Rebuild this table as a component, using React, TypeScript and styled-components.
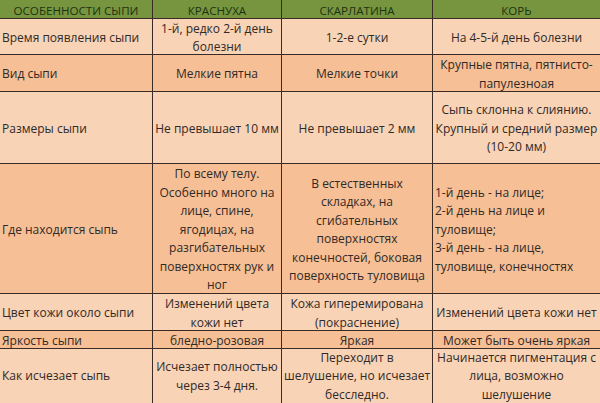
import React from "react";
import styled, { createGlobalStyle } from "styled-components";

const Global = createGlobalStyle`
  html, body { margin: 0; padding: 0; background: #f9d3b6; overflow: hidden; }
  body { width: 600px; height: 403px; }
`;

type Align = "left" | "center";
type Tone = "light" | "dark";

interface CellData {
  lines: string[];
  align?: Align;
}

interface RowData {
  height: number;
  tone: Tone;
  top?: number;
  cells: CellData[];
}

const Table = styled.div`
  display: grid;
  grid-template-columns: 152px 128px 150px 1fr;
  gap: 1px;
  background: #3a2c24;
  width: 600px;
  font-family: "Open Sans", "Noto Sans", sans-serif;
`;

const HeadCell = styled.div`
  height: 18px;
  background: #77953f;
  color: #1b3310;
  font-size: 11.6px;
  display: flex;
  align-items: center;
  justify-content: center;
  padding-top: 2px;
  box-sizing: border-box;
  white-space: nowrap;
`;

const Cell = styled.div<{ $tone: Tone; $align: Align; $h: number; $top: number }>`
  height: ${(p) => p.$h}px;
  box-sizing: border-box;
  background: ${(p) => (p.$tone === "light" ? "#f9d3b6" : "#f7bf95")};
  color: #2f2a27;
  font-size: 12px;
  line-height: 18.5px;
  display: flex;
  flex-direction: column;
  justify-content: center;
  align-items: ${(p) => (p.$align === "left" ? "flex-start" : "center")};
  text-align: ${(p) => p.$align};
  padding: ${(p) => p.$top}px 2px 0 2px;
  white-space: nowrap;
  overflow: hidden;
`;

const Line = styled.span`
  display: block;
`;

const headers = ["ОСОБЕННОСТИ СЫПИ", "КРАСНУХА", "СКАРЛАТИНА", "КОРЬ"];

const rows: RowData[] = [
  {
    height: 35,
    tone: "light",
    cells: [
      { lines: ["Время появления сыпи"], align: "left" },
      { lines: ["1-й, редко 2-й день", "болезни"] },
      { lines: ["1-2-е сутки"] },
      { lines: ["На 4-5-й день болезни"] },
    ],
  },
  {
    height: 36,
    tone: "dark",
    cells: [
      { lines: ["Вид сыпи"], align: "left" },
      { lines: ["Мелкие пятна"] },
      { lines: ["Мелкие точки"] },
      { lines: ["Крупные пятна, пятнисто-", "папулезноая"] },
    ],
  },
  {
    height: 71,
    tone: "light",
    cells: [
      { lines: ["Размеры сыпи"], align: "left" },
      { lines: ["Не превышает 10 мм"] },
      { lines: ["Не превышает 2 мм"] },
      { lines: ["Сыпь склонна к слиянию.", "Крупный и средний размер", "(10-20 мм)"] },
    ],
  },
  {
    height: 129,
    tone: "dark",
    cells: [
      { lines: ["Где находится сыпь"], align: "left" },
      {
        lines: [
          "По всему телу.",
          "Особенно много на",
          "лице, спине,",
          "ягодицах, на",
          "разгибательных",
          "поверхностях рук и",
          "ног",
        ],
      },
      {
        lines: [
          "В естественных",
          "складках, на",
          "сгибательных",
          "поверхностях",
          "конечностей, боковая",
          "поверхность туловища",
        ],
      },
      {
        lines: [
          "1-й день - на лице;",
          "2-й день на лице и",
          "туловище;",
          "3-й день - на лице,",
          "туловище, конечностях",
        ],
        align: "left",
      },
    ],
  },
  {
    height: 36,
    tone: "light",
    cells: [
      { lines: ["Цвет кожи около сыпи"], align: "left" },
      { lines: ["Изменений цвета", "кожи нет"] },
      { lines: ["Кожа гиперемирована", "(покраснение)"] },
      { lines: ["Изменений цвета кожи нет"] },
    ],
  },
  {
    height: 17,
    tone: "dark",
    cells: [
      { lines: ["Яркость сыпи"], align: "left" },
      { lines: ["бледно-розовая"] },
      { lines: ["Яркая"] },
      { lines: ["Может быть очень яркая"] },
    ],
  },
  {
    height: 54,
    tone: "light",
    top: 1,
    cells: [
      { lines: ["Как исчезает сыпь"], align: "left" },
      { lines: ["Исчезает полностью", "через 3-4 дня."] },
      { lines: ["Переходит в", "шелушение, но исчезает", "бесследно."] },
      { lines: ["Начинается пигментация с", "лица, возможно", "шелушение"] },
    ],
  },
];

export default function App() {
  return (
    <>
      <Global />
      <Table>
        {headers.map((h) => (
          <HeadCell key={h}>{h}</HeadCell>
        ))}
        {rows.map((row, ri) =>
          row.cells.map((c, ci) => (
            <Cell
              key={`${ri}-${ci}`}
              $tone={row.tone}
              $align={c.align ?? "center"}
              $h={row.height}
              $top={row.top ?? 3}
            >
              {c.lines.map((l, li) => (
                <Line key={li}>{l}</Line>
              ))}
            </Cell>
          ))
        )}
      </Table>
    </>
  );
}
